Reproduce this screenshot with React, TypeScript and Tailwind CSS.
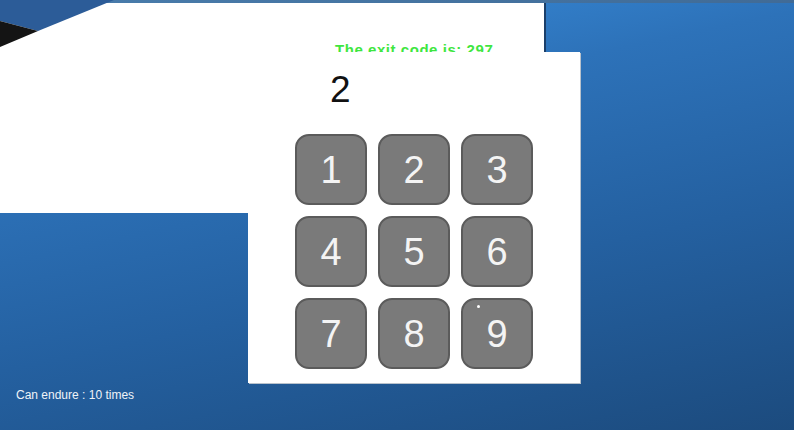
import React from 'react';

const keys = ['1', '2', '3', '4', '5', '6', '7', '8', '9'];

function KeyButton({ label }: { label: string }) {
  return (
    <button className="relative flex h-[71px] w-[72px] items-center justify-center rounded-[14px] border-2 border-[#5b5b5b] bg-[#7a7a7a] text-[38px] leading-none text-[#f4f4f4]">
      {label}
      {label === '9' && (
        <span className="absolute left-[14px] top-[5px] h-[3px] w-[3px] rounded-full bg-white" />
      )}
    </button>
  );
}

export default function App() {
  return (
    <div className="relative h-[430px] w-[794px] overflow-hidden bg-[linear-gradient(168deg,#3b92e2_0%,#2d72b9_30%,#2460a0_62%,#1c4b7e_100%)] font-['Liberation_Sans',Arial,sans-serif]">
      {/* thin grey strip along the top edge */}
      <div className="h-[3px] w-full bg-[#5f5f5f]/40" />

      {/* top white band with the exit code message */}
      <div className="h-[49px] w-[546px] overflow-hidden border-r-2 border-[#1b3f6a] bg-white pl-[335px] pt-[39px]">
        <p className="text-[15px] font-bold leading-[15px] tracking-[0.55px] text-[#3fe63f]">
          The exit code is: 297
        </p>
      </div>

      <div className="flex">
        <div className="flex w-[248px] flex-col">
          <div className="h-[161px] bg-white" />
          <p className="mt-[175px] pl-[16px] text-[12px] leading-[14px] text-[#eef3f8]">
            Can endure : 10 times
          </p>
        </div>

        {/* keypad panel */}
        <div className="h-[331px] w-[332px] bg-white shadow-[1px_1px_0_#b9c2cc]">
          <div className="pl-[82px] pt-[19px] text-[37px] leading-[37px] text-[#111]">2</div>
          <div className="ml-[47px] mt-[26px] grid w-[238px] grid-cols-3 gap-x-[11px] gap-y-[11px]">
            {keys.map((k) => (
              <KeyButton key={k} label={k} />
            ))}
          </div>
        </div>
      </div>

      {/* dark wedge in the top-left corner */}
      <svg className="absolute left-0 top-0" width="120" height="50" viewBox="0 0 120 50">
        <polygon points="0,0 114,0 38,31 0,21" fill="#2c5c98" />
        <polygon points="0,21 38,31 0,47" fill="#141414" />
      </svg>
    </div>
  );
}
